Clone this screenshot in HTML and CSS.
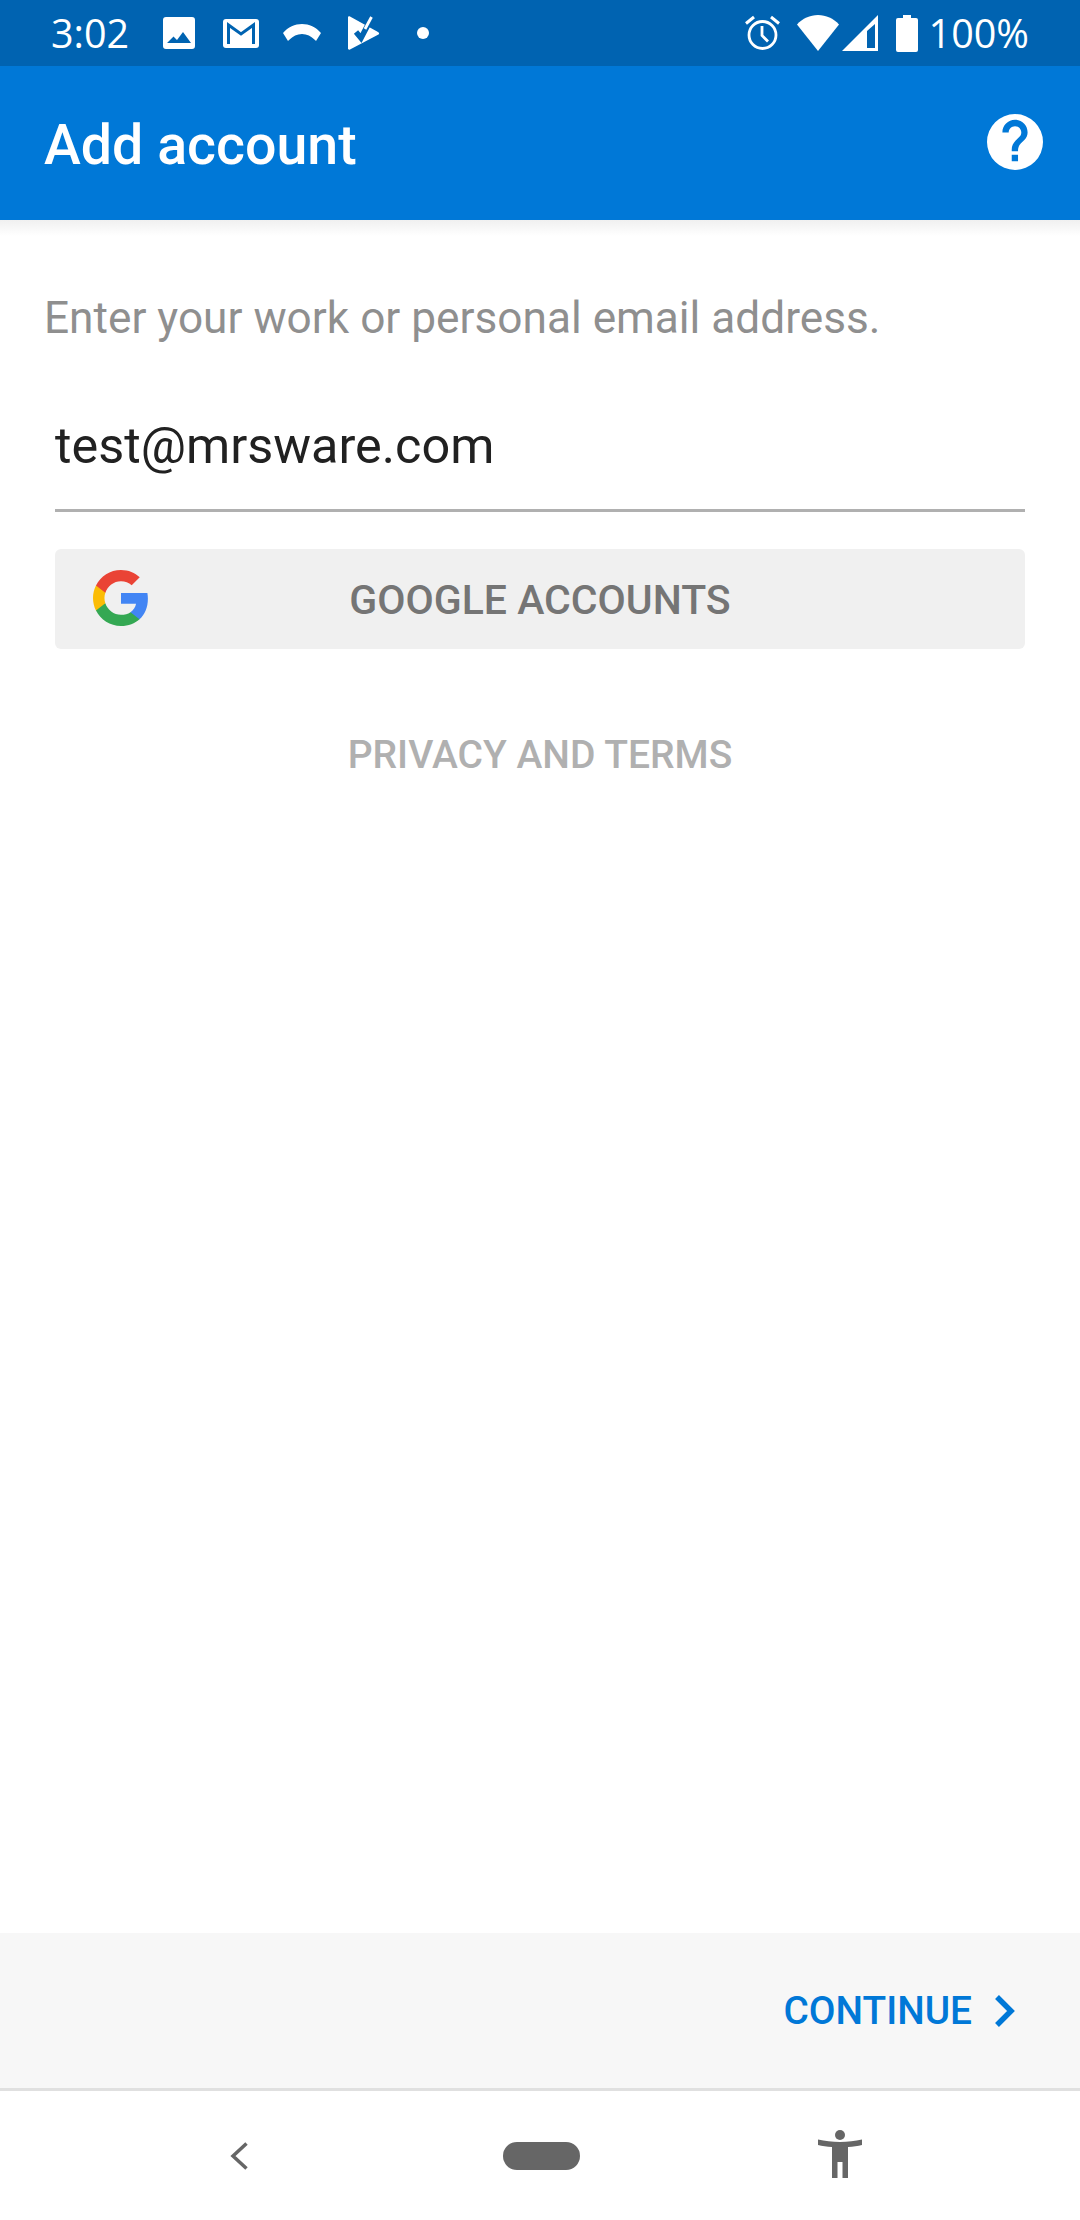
FILE: index.html
```html
<!DOCTYPE html>
<html lang="en">
<head>
  <meta charset="UTF-8">
  <title>Add account</title>
  <link rel="stylesheet" href="styles.css">
</head>
<body>
  <div class="screen">
    <div class="status-bar">
      <span class="status-time">3:02</span>
      <svg class="ic-photo" width="32" height="32" viewBox="0 0 32 32"><path fill="#fff" fill-rule="evenodd" d="M3 0h26a3 3 0 0 1 3 3v26a3 3 0 0 1-3 3H3a3 3 0 0 1-3-3V3a3 3 0 0 1 3-3zM4 26h24l-8-11-6 8-3.500-3.500z"/></svg>
      <svg class="ic-mail" width="36" height="29" viewBox="0 0 36 29"><rect width="36" height="29" rx="3" fill="#fff"/><path fill="none" stroke="#0063b1" stroke-width="3" d="M5.500 25V6L18 15 30.500 6v19"/></svg>
      <svg class="ic-call" width="38" height="18" viewBox="0 0 38 18"><path fill="#fff" d="M0 9C5 3 12 0 19 0s14 3 19 9l-5 8-1-1c-4-4-8-6-13-6s-9 2-13 6l-1 1z"/></svg>
      <svg class="ic-play" width="32" height="34" viewBox="0 0 32 34"><path fill="#fff" d="M0 1.500C0 .500 1 0 2 .500L30 16c1.500.8 1.500 2 0 2.800L2 33.500c-1 .5-2 0-2-1z"/><path fill="none" stroke="#0063b1" stroke-width="5.500" d="M8 16l5 6L23 3"/><path fill="none" stroke="#fff" stroke-width="2.800" d="M23.500 1 17 13"/></svg>
      <span class="status-dot"></span>
      <span class="status-spacer"></span>
      <svg class="ic-alarm" width="35" height="36" viewBox="0 0 35 36"><g fill="none" stroke="#fff"><circle cx="17.500" cy="20" r="13.500" stroke-width="2.800"/><path d="M17 11v9.500l6 6" stroke-width="2.800"/><path d="M1 8.500 9 2M34 8.500 26 2" stroke-width="3"/></g></svg>
      <svg class="ic-wifi" width="42" height="36" viewBox="0 0 42 36"><path fill="#fff" d="M0 9.500C5.500 3.500 13 0 21 0s15.500 3.500 21 9.500L21 36z"/></svg>
      <svg class="ic-signal" width="36" height="36" viewBox="0 0 36 36"><path fill="#fff" fill-rule="evenodd" d="M36 0v36H0zM33 9 25 16v17h8z"/></svg>
      <svg class="ic-battery" width="22" height="37" viewBox="0 0 22 37"><path fill="#fff" d="M7 0h8v3h5a2 2 0 0 1 2 2v30a2 2 0 0 1-2 2H2a2 2 0 0 1-2-2V5a2 2 0 0 1 2-2h5z"/></svg>
      <span class="status-battery">100%</span>
    </div>

    <div class="app-bar">
      <span class="app-title">Add account</span>
      <svg class="ic-help" width="56" height="56" viewBox="0 0 24 24"><path fill="#fff" d="M12 0a12 12 0 1 0 0 24 12 12 0 0 0 0-24zm1.300 20.300h-2.700v-2.800h2.700zm2.800-9.300-1.200 1.200c-1 1-1.600 1.800-1.600 3.800h-2.700v-.7c0-1.500.6-2.800 1.600-3.800l1.700-1.700c.5-.5.800-1.200.8-1.900 0-1.500-1.200-2.700-2.700-2.700S9.300 6.400 9.300 7.900H6.600c0-3 2.400-5.400 5.400-5.400s5.400 2.400 5.400 5.400c0 1.200-.5 2.300-1.300 3.100z"/></svg>
    </div>

    <div class="content">
      <p class="prompt">Enter your work or personal email address.</p>
      <div class="email-field">test@mrsware.com</div>
      <div class="google-btn">
        <svg class="ic-google" width="56" height="56" viewBox="0 0 18 18">
          <path fill="#4285f4" d="M17.640 9.200c0-.637-.057-1.251-.164-1.840H9v3.481h4.844c-.209 1.125-.843 2.078-1.796 2.717v2.258h2.908c1.702-1.567 2.684-3.874 2.684-6.615z"/>
          <path fill="#34a853" d="M9 18c2.430 0 4.467-.806 5.956-2.180l-2.908-2.259c-.806.540-1.837.860-3.048.860-2.344 0-4.328-1.584-5.036-3.711H.957v2.332C2.438 15.983 5.482 18 9 18z"/>
          <path fill="#fbbc05" d="M3.964 10.710c-.180-.540-.282-1.117-.282-1.710s.102-1.170.282-1.710V4.958H.957C.347 6.173 0 7.548 0 9s.348 2.827.957 4.042l3.007-2.332z"/>
          <path fill="#ea4335" d="M9 3.580c1.321 0 2.508.454 3.440 1.345l2.582-2.580C13.463.891 11.426 0 9 0 5.482 0 2.438 2.017.957 4.958L3.964 7.290C4.672 5.163 6.656 3.580 9 3.580z"/>
        </svg>
        <span>GOOGLE ACCOUNTS</span>
      </div>
      <div class="privacy">PRIVACY AND TERMS</div>
    </div>

    <div class="footer">
      <span class="continue">CONTINUE</span>
      <svg class="ic-chevron" width="22" height="32" viewBox="0 0 22 32"><path fill="none" stroke="#0078d7" stroke-width="5.500" d="M2 2l14 14L2 30"/></svg>
    </div>

    <div class="nav-bar">
      <svg class="ic-back" width="18" height="28" viewBox="0 0 18 28"><path fill="none" stroke="#666" stroke-width="3.500" d="M16.500 1.500 3 14l13.500 12.500"/></svg>
      <span class="home-pill"></span>
      <svg class="ic-a11y" width="44" height="49" viewBox="0 0 44 49"><circle cx="22" cy="5" r="5" fill="#666"/><path fill="#666" d="M0 9.500c7 1.500 14 2.500 22 2.500s15-1 22-2.500V15c-4 1-9 1.600-14 2v31h-5.500V32h-5v16H14V17C9 16.600 4 16 0 15z"/></svg>
    </div>
  </div>
</body>
</html>
```

FILE: styles.css
```css
* {
  box-sizing: border-box;
}
body {
  margin: 0;
  font-family: Roboto, "Liberation Sans", sans-serif;
  background-color: #ffffff;
}
.screen {
  width: 1080px;
  height: 2220px;
  display: flex;
  flex-direction: column;
}
.status-bar {
  height: 66px;
  flex-shrink: 0;
  background-color: #0063b1;
  color: #ffffff;
  display: flex;
  align-items: center;
  padding-left: 51px;
  font-family: "Open Sans", Roboto, sans-serif;
  font-size: 39.5px;
}
.status-time {
  width: 112px;
}
.ic-mail {
  margin-left: 28px;
}
.ic-call {
  margin-left: 24px;
}
.ic-play {
  margin-left: 27px;
}
.status-dot {
  width: 12px;
  height: 12px;
  margin-left: 37px;
  border-radius: 50%;
  background-color: #ffffff;
}
.status-spacer {
  flex: 1;
}
.ic-wifi {
  margin-left: 17px;
}
.ic-signal {
  margin-left: 3px;
}
.ic-battery {
  margin-left: 18px;
}
.status-battery {
  margin-left: 11px;
  margin-right: 51px;
}
.app-bar {
  height: 154px;
  flex-shrink: 0;
  background-color: #0078d7;
  color: #ffffff;
  display: flex;
  align-items: center;
  justify-content: space-between;
  padding: 4px 37px 0 44px;
}
.ic-help {
  margin-top: -6px;
}
.app-title {
  font-size: 55.5px;
  font-weight: 500;
}
.content {
  flex: 1;
  padding: 0 55px;
  background: linear-gradient(#f0f0f0, #ffffff 16px) no-repeat;
}
.prompt {
  margin: 73px 0 0 -11px;
  font-size: 44.2px;
  line-height: 50px;
  color: #8f8f8f;
}
.email-field {
  margin-top: 75px;
  height: 94px;
  border-bottom: 3px solid #b0b0b0;
  font-size: 50.4px;
  line-height: 56px;
  color: #212121;
}
.google-btn {
  position: relative;
  margin-top: 37px;
  height: 100px;
  border-radius: 6px;
  background-color: #f0f0f0;
  color: #757575;
  display: flex;
  align-items: center;
  justify-content: center;
  padding-top: 2px;
  font-size: 41px;
  font-weight: 500;
}
.ic-google {
  position: absolute;
  left: 38px;
  top: 21px;
}
.privacy {
  margin-top: 82px;
  text-align: center;
  font-size: 39px;
  font-weight: 500;
  line-height: 48px;
  color: #b0b0b0;
}
.footer {
  height: 158px;
  flex-shrink: 0;
  background-color: #f7f7f7;
  border-bottom: 3px solid #e0e0e0;
  display: flex;
  align-items: center;
  justify-content: flex-end;
  padding-right: 63px;
}
.continue {
  font-size: 38.8px;
  font-weight: 500;
  color: #0078d7;
}
.ic-chevron {
  margin-left: 23px;
}
.nav-bar {
  height: 129px;
  flex-shrink: 0;
  display: flex;
  align-items: center;
  padding-left: 230px;
}
.home-pill {
  width: 77px;
  height: 28px;
  margin-left: 255px;
  border-radius: 14px;
  background-color: #666666;
}
.ic-a11y {
  margin-left: 238px;
  margin-top: -2px;
}
```
